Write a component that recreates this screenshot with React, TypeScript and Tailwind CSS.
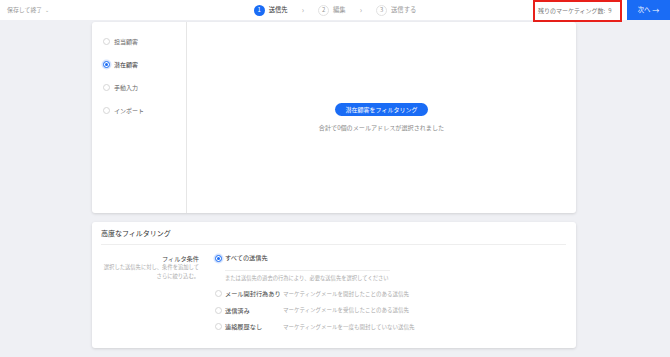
import React from "react";

const F = { fontFamily: '"Noto Sans CJK JP", "Noto Sans", sans-serif' };

function Radio({ checked = false }: { checked?: boolean }) {
  if (checked) {
    return (
      <span className="relative flex h-[7px] w-[7px] shrink-0 items-center justify-center rounded-full border border-[#1a6cf5] bg-white shadow-[0_0_0_1.5px_rgba(26,108,245,0.18)]">
        <span className="h-[3px] w-[3px] rounded-full bg-[#1a6cf5]" />
      </span>
    );
  }
  return <span className="h-[7px] w-[7px] shrink-0 rounded-full border border-[#d6d6d6] bg-white" />;
}

function Step({ n, label, active = false }: { n: number; label: string; active?: boolean }) {
  return (
    <div className="flex items-center gap-[4px]">
      <span
        className={
          active
            ? "flex h-[11px] w-[11px] items-center justify-center rounded-full bg-[#1a6cf5] text-[6px] leading-none text-white"
            : "flex h-[11px] w-[11px] items-center justify-center rounded-full border border-[#e2e2e2] text-[6px] leading-none text-[#999]"
        }
      >
        {n}
      </span>
      <span className={active ? "text-[6.3px] text-[#333]" : "text-[6.3px] text-[#999]"}>{label}</span>
    </div>
  );
}

function Chevron() {
  return <span className="text-[8px] leading-none text-[#aaa]">›</span>;
}

export default function App() {
  const leftOptions = [
    { label: "担当顧客", checked: false },
    { label: "潜在顧客", checked: true },
    { label: "手動入力", checked: false },
    { label: "インポート", checked: false },
  ];
  const conds = [
    { label: "メール開封行為あり", desc: "マーケティングメールを開封したことのある送信先" },
    { label: "送信済み", desc: "マーケティングメールを受信したことのある送信先" },
    { label: "連絡履歴なし", desc: "マーケティングメールを一度も開封していない送信先" },
  ];
  return (
    <div className="min-h-screen bg-[#eff0f4]" style={F}>
      <header className="grid h-[20px] grid-cols-[1fr_auto_1fr] items-start bg-white">
        <div className="flex h-[20px] items-center pl-[7px] text-[5.9px] text-[#999]">
          保存して終了 <span className="ml-[3px] text-[5px]">⌄</span>
        </div>
        <div className="flex h-[20px] items-center gap-[14px]">
          <Step n={1} label="送信先" active />
          <Chevron />
          <Step n={2} label="編集" />
          <Chevron />
          <Step n={3} label="送信する" />
        </div>
        <div className="flex items-start justify-end">
          <div className="flex h-[21.5px] w-[89px] items-center border-2 border-[#e8201a] pl-[3px] text-[6px] whitespace-nowrap text-[#777]">
            残りのマーケティング数:<span className="ml-[3px]">9</span>
          </div>
          <button className="ml-[5px] flex h-[20px] w-[43px] items-center justify-center bg-[#1a6cf5] text-[6.3px] text-white">
            次へ <span className="ml-[2px] text-[7px]">→</span>
          </button>
        </div>
      </header>

      <main className="flex flex-col gap-[9px] pl-[92px] pr-[94px] pt-[2px] pb-[10px]">
        <section className="flex h-[191px] rounded-[3px] bg-white shadow-[0_1px_3px_rgba(0,0,0,0.13)]">
          <div className="flex w-[95px] shrink-0 flex-col border-r border-[#e6e6e6] pl-[10.5px] pt-[7.5px]">
            {leftOptions.map((o) => (
              <div key={o.label} className="flex h-[23px] items-center gap-[4.5px]">
                <Radio checked={o.checked} />
                <span className={o.checked ? "text-[6px] text-[#333]" : "text-[6px] text-[#666]"}>{o.label}</span>
              </div>
            ))}
          </div>
          <div className="flex flex-1 flex-col items-center pt-[81px]">
            <button className="flex h-[13px] w-[93px] items-center justify-center rounded-full bg-[#1a6cf5] text-[6px] text-white">
              潜在顧客をフィルタリング
            </button>
            <div className="mt-[8px] text-[6.1px] leading-[8px] text-[#888]">合計で0個のメールアドレスが選択されました</div>
          </div>
        </section>

        <section className="rounded-[3px] bg-white pl-[9px] pr-[10px] pb-[13px] shadow-[0_1px_3px_rgba(0,0,0,0.13)]">
          <div className="border-b border-[#eeeeee] pt-[6px] pb-[6px] text-[7px] leading-[10px] text-[#333]">
            高度なフィルタリング
          </div>
          <div className="flex">
            <div className="flex w-[98px] shrink-0 flex-col items-end pt-[8.5px] text-right">
              <div className="text-[6.2px] leading-[9px] text-[#444]">フィルタ条件</div>
              <div className="text-[5.3px] leading-[9px] text-[#aaa]">選択した送信先に対し、条件を追加して</div>
              <div className="text-[5.3px] leading-[9px] text-[#aaa]">さらに絞り込む。</div>
            </div>
            <div className="ml-[15.5px] flex flex-col pt-[8px]">
              <div className="flex h-[10px] items-center gap-[3.5px]">
                <Radio checked />
                <span className="text-[6.2px] text-[#333]">すべての送信先</span>
              </div>
              <div className="ml-[10.5px] mt-[7px] w-[165px] border-t border-[#eeeeee]" />
              <div className="ml-[10.5px] mt-[3px] text-[5.3px] leading-[8px] whitespace-nowrap text-[#aaa]">
                または送信先の過去の行為により、必要な送信先を選択してください
              </div>
              <div className="mt-[3.5px] flex flex-col">
                {conds.map((c) => (
                  <div key={c.label} className="flex h-[16.5px] items-center">
                    <Radio />
                    <span className="ml-[3.5px] w-[58px] shrink-0 whitespace-nowrap text-[6.2px] text-[#444]">{c.label}</span>
                    <span className="whitespace-nowrap text-[5.5px] text-[#aaa]">{c.desc}</span>
                  </div>
                ))}
              </div>
            </div>
          </div>
        </section>
      </main>
    </div>
  );
}
